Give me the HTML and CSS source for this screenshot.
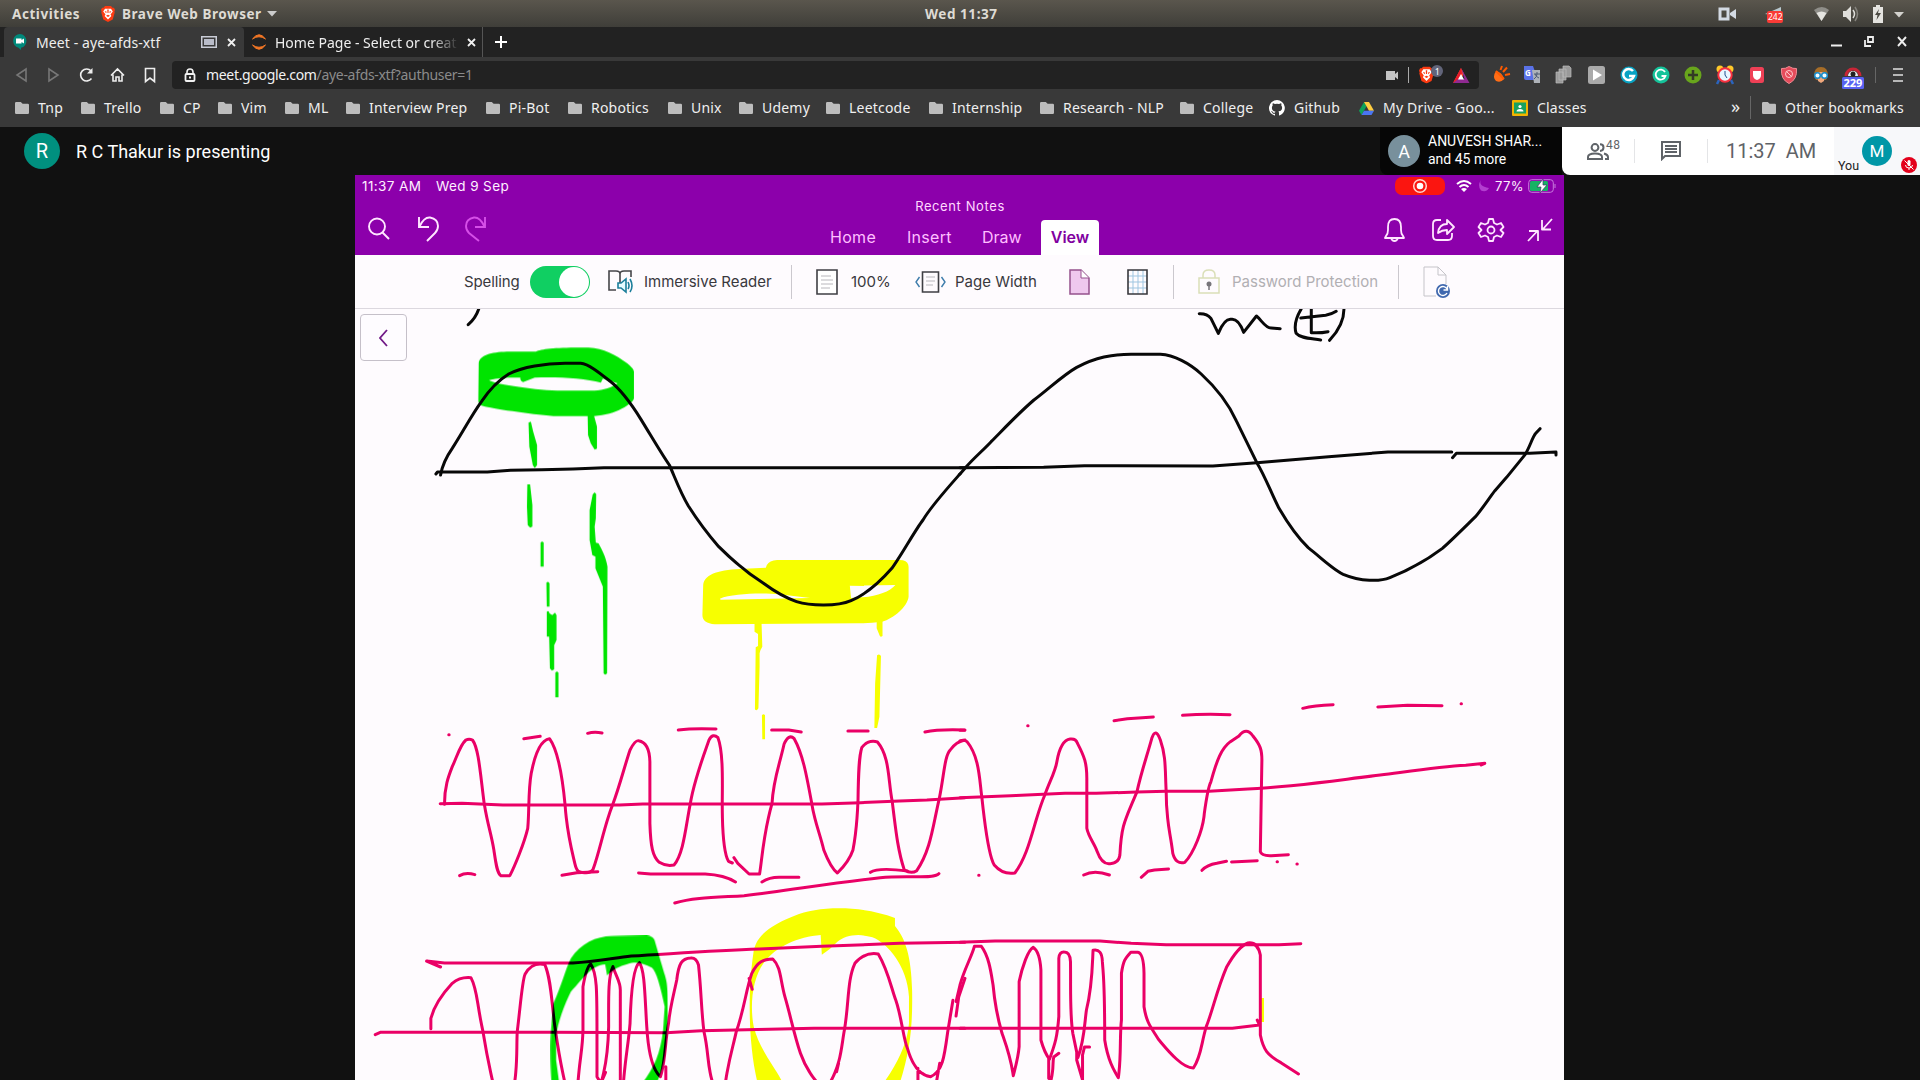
FILE: index.html
```html
<!DOCTYPE html>
<html lang="en">
<head>
<meta charset="utf-8">
<title>Meet - aye-afds-xtf</title>
<link rel="stylesheet" href="styles.css">
</head>
<body>
<svg class="defs" width="0" height="0">
  <symbol id="folder" viewBox="0 0 14 12"><path d="M1.2 0h4.6l1.8 1.8h5.2q1.2 0 1.2 1.2v7.8q0 1.2-1.2 1.2H1.2Q0 12 0 10.800V1.200Q0 0 1.200 0z" fill="#bdbdbd"/></symbol>
  <symbol id="lion" viewBox="0 0 14 16"><path d="M4 0h6l1.500 1.700h1.500L14 4l-.6 1.500.3 1-2 7L7 16l-4.700-2.500-2-7 .3-1L0 4l1-2.300h1.500z" fill="#fb3b12"/><path d="M4 2.700h6l1.800 2.800-2.300 3L10.400 10 7 13.500 3.600 10l.9-1.500-2.300-3z" fill="#fff"/><path d="M3.600 5l2.200.8L5 7.300zM10.400 5l-2.200.8.8 1.500zM5 9.700l2-.9 2 .9-2 1.200zM6.300 3.500h1.400L7.500 7h-1z" fill="#fb3b12"/></symbol>
</svg>

<header class="topbar">
  <span class="activities">Activities</span>
  <svg class="brave" width="14" height="16"><use href="#lion"/></svg>
  <span class="appname">Brave Web Browser</span>
  <svg width="10" height="6"><path d="M0 0h10L5 5.500z" fill="#ccc"/></svg>
  <span class="clock">Wed 11:37</span>
  <svg class="tray" width="190" height="20" viewBox="0 0 190 20">
    <path d="M2 5h8v10H2z" fill="none" stroke="#d3dae3" stroke-width="3"/><path d="M12 9l6-4v10l-6-4z" fill="#d3dae3"/>
    <path d="M47 10L63 3v8h-8z" fill="#b9c9cf"/><rect x="49" y="7" width="16" height="12" rx="2" fill="#fa3b36"/><text x="50" y="16.300" class="tray-num">242</text>
    <path d="M96 6q8-6 15 0l-7.500 11z" fill="#8f8e89"/><path d="M98.500 9q5-3 10 0l-5 8z" fill="#e5e4e0"/>
    <path d="M125 7h3l5-5v16l-5-5h-3z" fill="#dfdeda"/><path d="M135 6q3 4 0 8" stroke="#dfdeda" fill="none" stroke-width="1.500"/><path d="M137 3q5 7 0 14" stroke="#85837d" fill="none" stroke-width="1.500"/>
    <path d="M155 3h3V1h4v2h3v16h-10z" fill="#e5e4e0"/><path d="M161 5l-4 6h2.500l-1 5 4.500-7h-3z" fill="#4c4a43"/>
    <path d="M176 8h10l-5 5.500z" fill="#d3d2ce"/>
  </svg>
</header>

<div class="tabstrip">
  <div class="tab active">
    <svg width="14" height="16" viewBox="0 0 14 16"><path d="M7 0a7 7 0 0 1 1 13.800V16L5.500 13.800A7 7 0 0 1 7 0z" fill="#00897b"/><path d="M3 4.500h5.500v1.600L11 4.500v5l-2.500-1.600v1.600H3z" fill="#fff"/></svg>
    <span class="tab-name">Meet - aye-afds-xtf</span>
    <svg width="16" height="12"><rect x=".75" y=".75" width="14.500" height="10.500" fill="none" stroke="#c9ccd6" stroke-width="1.500"/><rect x="3" y="3" width="10" height="6" fill="#b9bcc9"/></svg>
    <svg class="x" width="9" height="9"><path d="M1 1l7 7M8 1L1 8" stroke="#f0f0f0" stroke-width="1.800"/></svg>
  </div>
  <div class="tab second">
    <svg width="16" height="16"><path d="M1.500 5Q8-3.500 14.500 5 8 .5 1.500 5zM1.500 11q6.500 8.500 13 0Q8 15.500 1.500 11z" fill="#f37726" stroke="#f37726"/></svg>
    <span class="tab-name fade">Home Page - Select or creat</span>
    <svg class="x" width="9" height="9"><path d="M1 1l7 7M8 1L1 8" stroke="#f0f0f0" stroke-width="1.800"/></svg>
  </div>
  <svg class="plus" width="12" height="12"><path d="M6 0v12M0 6h12" stroke="#fff" stroke-width="2"/></svg>
  <svg class="winctl" width="77" height="12"><path d="M0 9.500h11" stroke="#eee" stroke-width="2"/><path d="M37 1h5v5h-5zM34 4v6h6" fill="none" stroke="#eee" stroke-width="1.800"/><path d="M67 1l8 9M75 1l-8 9" stroke="#eee" stroke-width="1.900"/></svg>
</div>

<div class="toolbar">
  <svg class="nav" width="142" height="18" viewBox="0 0 142 18" fill="none" stroke="#eee" stroke-width="1.600">
    <path d="M11 3v12L2 9z" stroke="#777"/><path d="M34 3v12l9-6z" stroke="#777"/>
    <path d="M76 4.800A6 6 0 1 0 76.500 12.500"/><path d="M77.500 2v5.500H72z" fill="#eee" stroke="none"/>
    <path d="M96 9.500l6.500-6.500 6.500 6.500M98 8.500V15h3v-4h3v4h3V8.500"/><path d="M130.500 2.500h9v13l-4.500-3.500-4.500 3.500z"/>
  </svg>
  <div class="address">
    <svg class="lock" width="12" height="14"><path d="M3 6V4q0-3 3-3t3 3v2" fill="none" stroke="#f1f1f1" stroke-width="1.600"/><rect x="1.500" y="6" width="9" height="7" rx="1" fill="none" stroke="#f1f1f1" stroke-width="1.800"/><rect x="5" y="8.500" width="2" height="2" fill="#f1f1f1"/></svg>
    <span class="url"><b>meet.google.com</b>/aye-afds-xtf?authuser=1</span>
    <svg class="addr-icons" width="86" height="22" viewBox="0 0 86 22">
      <path d="M0 7h9v3l3-2.500v8L9 13v3H0z" fill="#c4c4c4"/><path d="M22.500 3v16" stroke="#aaa"/>
      <svg x="33" y="2" width="15" height="18" viewBox="0 0 14 16"><use href="#lion"/></svg>
      <circle cx="51" cy="7" r="6" fill="#62657a"/><text x="48.700" y="10.500" class="badge-one">1</text>
      <path d="M67 19l8-15 3 5.700-3 5z" fill="#ff4724"/><path d="M75 4l8.500 15H67l4.500-4h7z" fill="#902a92"/><path d="M67 19l8-15 1 6-5 6z" fill="#e51b2b"/><path d="M75 10l3 5.500h-6z" fill="#fff"/>
    </svg>
  </div>
  <svg class="ext" width="412" height="30" viewBox="0 0 412 30">
    <path d="M4 11q6 1 8 8-3 4-8 2-4-4 0-10z" fill="#ff6d16"/><path d="M4 11l8 8M8.500 10l1.500-4M11 12l4-4.500M13 15l5-1" stroke="#ff5a00" stroke-width="2"/>
    <path d="M32 6h9l5 14H34q-2 0-2-2z" fill="#5a72e8"/><path d="M40 10h8v13h-6z" fill="#aeb2b8"/><text x="33" y="16" class="gtr">G</text><path d="M42 14h6m-3-2v2q0 3-3 5m1-5q1 3 4 4" stroke="#4e5c75" fill="none"/>
    <g fill="#999" stroke="#bbb" stroke-width=".7"><path d="M64 12h7v11h-7zM67 9h7v11h-7zM71 6h6l2 2v9h-8z"/></g>
    <rect x="96" y="6" width="17" height="18" rx="2.500" fill="#aaa"/><path d="M101 9.500v11l9-5.500z" fill="#fff"/>
    <circle cx="137" cy="15" r="8.500" fill="#08a3c4"/><path d="M141 11a5.500 5.500 0 1 0 1 5h-5" fill="none" stroke="#fff" stroke-width="2.500"/>
    <circle cx="169" cy="15" r="8.500" fill="#15c39a"/><path d="M173 12a5 5 0 1 0 .5 4h-4" fill="none" stroke="#fff" stroke-width="1.800"/>
    <circle cx="201" cy="15" r="8.500" fill="#68a51c"/><path d="M201 10v10M196 15h10" stroke="#333b25" stroke-width="2.500"/>
    <path d="M227 20l-2 4M239 20l2 4" stroke="#2a64be" stroke-width="2.500"/><circle cx="228" cy="9" r="3.500" fill="#ffc929"/><circle cx="238" cy="9" r="3.500" fill="#ffc929"/><circle cx="233" cy="15" r="6.700" fill="#e8f7ff" stroke="#f9313f" stroke-width="2"/><path d="M233 11v4l2 3" stroke="#1d508f" fill="none"/>
    <rect x="258" y="7" width="14" height="16" rx="2.500" fill="#ef4056"/><path d="M261 11h8v4q0 4-4 5-4-1-4-5z" fill="#fff"/>
    <path d="M297 6.500q4 2.500 7.500 2 1 11-7.500 15-8.500-4-7.500-15 4 .5 7.500-2z" fill="#e64b5b" stroke="#f08b93"/><circle cx="297" cy="14" r="3.500" fill="none" stroke="#ffc8ca"/><path d="M294.500 11.500l5 5" stroke="#ffc8ca"/>
    <path d="M322 16q0-9 7-9t7 9l-2 4h-10z" fill="#a66d28"/><path d="M325 12h8l-1 9-3 2-3-2z" fill="#f1a87c"/><circle cx="325.500" cy="15.500" r="2.800" fill="#f0fcff" stroke="#168ccb" stroke-width="1.500"/><circle cx="332.500" cy="15.500" r="2.800" fill="#f0fcff" stroke="#168ccb" stroke-width="1.500"/>
    <path d="M354 16a7 7 0 0 1 14 0" fill="none" stroke="#c82536" stroke-width="3"/><path d="M356 16a5 5 0 0 1 10 0" fill="#eee"/><circle cx="361" cy="14" r="2.500" fill="#222"/><rect x="350" y="17" width="22" height="12" rx="1.500" fill="#5862f2"/><text x="351.500" y="27" class="ext-num">229</text>
    <path d="M383.500 7v16" stroke="#666"/><path d="M401 9h10M401 15h10M401 21h10" stroke="#e1e1e1" stroke-width="1.600"/>
  </svg>
</div>

<nav class="bookmarks">
  <a><svg width="14" height="12"><use href="#folder"/></svg>Tnp</a>
  <a><svg width="14" height="12"><use href="#folder"/></svg>Trello</a>
  <a><svg width="14" height="12"><use href="#folder"/></svg>CP</a>
  <a><svg width="14" height="12"><use href="#folder"/></svg>Vim</a>
  <a><svg width="14" height="12"><use href="#folder"/></svg>ML</a>
  <a><svg width="14" height="12"><use href="#folder"/></svg>Interview Prep</a>
  <a><svg width="14" height="12"><use href="#folder"/></svg>Pi-Bot</a>
  <a><svg width="14" height="12"><use href="#folder"/></svg>Robotics</a>
  <a><svg width="14" height="12"><use href="#folder"/></svg>Unix</a>
  <a><svg width="14" height="12"><use href="#folder"/></svg>Udemy</a>
  <a><svg width="14" height="12"><use href="#folder"/></svg>Leetcode</a>
  <a><svg width="14" height="12"><use href="#folder"/></svg>Internship</a>
  <a><svg width="14" height="12"><use href="#folder"/></svg>Research - NLP</a>
  <a><svg width="14" height="12"><use href="#folder"/></svg>College</a>
  <a><svg width="16" height="16" viewBox="0 0 16 16"><path d="M8 0a8 8 0 0 0-2.500 15.600c.4.100.5-.2.500-.4v-1.400c-2.200.5-2.700-1-2.700-1-.4-.9-.9-1.200-.9-1.200-.7-.5.100-.5.100-.5.800.1 1.200.8 1.200.8.700 1.300 1.900.9 2.300.7.100-.5.300-.9.500-1.100-1.800-.2-3.600-.9-3.600-4 0-.9.300-1.600.8-2.100-.1-.2-.4-1 .1-2.100 0 0 .7-.2 2.200.8a7.600 7.600 0 0 1 4 0c1.500-1 2.200-.8 2.200-.8.400 1.100.2 1.900.1 2.100.5.600.8 1.300.8 2.100 0 3.100-1.900 3.700-3.700 3.900.3.300.6.800.6 1.500v2.200c0 .2.100.5.600.4A8 8 0 0 0 8 0z" fill="#fff"/></svg>Github</a>
  <a><svg width="15" height="13" viewBox="0 0 15 13"><path d="M5 0L0 8.700 2.500 13l5-8.700z" fill="#0da25a"/><path d="M5 0h5l5 8.700h-5z" fill="#ffcd40"/><path d="M2.500 13L5 8.700h10L12.500 13z" fill="#4a75f2"/></svg>My Drive - Goo...</a>
  <a><svg width="16" height="16" viewBox="0 0 16 16"><rect width="16" height="16" rx="1" fill="#f4b400"/><rect x="2" y="2.500" width="12" height="11" fill="#19a15f"/><circle cx="8" cy="6.500" r="1.600" fill="#fff"/><path d="M4.500 11.500q0-2.500 3.500-2.500t3.500 2.500z" fill="#fff"/></svg>Classes</a>
  <span class="more">»</span>
  <a class="other"><svg width="14" height="12"><use href="#folder"/></svg>Other bookmarks</a>
</nav>

<main class="meet">
  <div class="meet-head">
    <span class="avatar host">R</span>
    <span class="presenting">R C Thakur is presenting</span>
    <div class="others"><span class="avatar guest">A</span><div class="names">ANUVESH SHAR...<br>and 45 more</div></div>
    <div class="controls">
      <div class="ctl people"><svg width="22" height="17" viewBox="0 0 22 17" fill="none" stroke="#5f6368" stroke-width="2"><circle cx="8" cy="4.500" r="3.400"/><path d="M1 16v-2q0-3.500 7-3.500t7 3.500v2z"/><path d="M13 1.300q3.500 0 3.500 3.200T13 7.900" /><path d="M17 10.500q4 1.200 4 3.500v2h-3"/></svg><sup>48</sup></div>
      <div class="ctl chat"><svg width="20" height="20" viewBox="0 0 20 20"><path d="M1 1h18v14H4l-3 3z" fill="none" stroke="#5f6368" stroke-width="2"/><path d="M4 5h12M4 8h12M4 11h12" stroke="#5f6368" stroke-width="1.800"/></svg></div>
      <div class="ctl time">11:37&nbsp; AM</div>
      <div class="you"><span>You</span><span class="avatar me">M</span>
        <svg class="mic" width="16" height="16" viewBox="0 0 16 16"><circle cx="8" cy="8" r="8" fill="#e3001b"/><rect x="6.500" y="3" width="3" height="6" rx="1.500" fill="#fff"/><path d="M4.500 8q0 3 3.500 3t3.500-3M8 11v2M3.500 3.500l9 9" stroke="#fff" fill="none"/></svg></div>
    </div>
  </div>

  <section class="share">
    <div class="purple">
      <div class="status"><span class="s-time">11:37 AM</span><span class="s-date">Wed 9 Sep</span>
        <svg class="s-icons" width="98" height="18" viewBox="0 0 98 18"><rect width="50" height="18" rx="7" fill="#fb1510"/><circle cx="25" cy="9" r="6.300" fill="none" stroke="#ffd5cf" stroke-width="1.500"/><circle cx="25" cy="9" r="3.300" fill="#fff"/><g fill="none" stroke="#fff" stroke-width="2"><path d="M62 7q7-6 14 0M64.500 10q4.500-4 9 0"/></g><path d="M69 15l-3-3q3-2 6 0z" fill="#fff"/><path d="M86 3q-3 6 8 8-3 5-8 2.500-4-5 0-10.500z" fill="#b33fd0"/></svg>
        <span class="s-pct">77%</span>
        <svg width="28" height="14" viewBox="0 0 28 14"><rect x=".7" y=".7" width="24.600" height="12.600" rx="3" fill="none" stroke="#c77add"/><rect x="2" y="2" width="18" height="10" rx="1.500" fill="#16b364"/><path d="M15 0L9 8h4l-1 6 7-8h-4z" fill="#fff" stroke="#44306a" stroke-width=".7"/><path d="M27 5v4" stroke="#c77add"/></svg>
      </div>
      <div class="doc-title">Recent Notes</div>
      <div class="tabsrow">
        <svg class="left-tools" width="122" height="28" viewBox="0 0 122 28" fill="none" stroke="#ffe6ff" stroke-width="1.900"><circle cx="9" cy="11.500" r="8"/><path d="M14.500 17.500l6.500 6.500"/><path d="M51 2v10h10M51.500 11.500Q56 2 62 2.500 70 4 70 11q0 4-3 7l-8 8"/><path d="M117 2v10h-10M116.500 11.500Q112 2 106 2.500 98 4 98 11q0 4 3 7l10 8" stroke="#d64fe8"/></svg>
        <span class="tb home">Home</span><span class="tb insert">Insert</span><span class="tb draw">Draw</span><span class="tb view">View</span>
        <svg class="right-tools" width="170" height="28" viewBox="0 0 170 28" fill="none" stroke="#ffe6ff" stroke-width="1.800" stroke-linejoin="round"><path d="M3 20q2-2 2-6v-3q0-8 6.500-8t6.500 8v3q0 4 2 6l1 2H2zM8 22q1 3 3.500 3t3.500-3"/><path d="M58 4h-4q-4 0-4 4v12q0 4 4 4h11q4 0 4-4v-3M55 17q1-9 9-9V4l7 7-7 7v-4q-5 0-9 3z"/><path d="M106 3h4l1 4 3 1.500 4-1.500 2.500 4-3 3 3 3-2.500 4-4-1.500-3 1.500-1 4h-4l-1-4-3-1.500-4 1.500-2.500-4 3-3-3-3 2.500-4 4 1.500 3-1.500z"/><circle cx="108" cy="14" r="3.500"/><path d="M169 3l-9 10M159 4v9.500h9M145 25l9-9.500M146 15h9v10"/></svg>
      </div>
    </div>
    <div class="ribbon">
      <span class="spelling">Spelling</span><span class="toggle"><i></i></span>
      <svg width="26" height="28" viewBox="0 0 26 28" fill="none" stroke="#454549" stroke-width="1.600"><path d="M8 22H1V3h7q4 0 4 3v13M12 6q0-3 4-3h7v6"/><path d="M10 15h3l5-4v13l-5-4h-3z" fill="#e6fbff" stroke="#1c7f9b"/><path d="M20 14q2 4 0 7M22 11q4 7 0 13" stroke="#1c7f9b"/></svg>
      <span class="lbl imm">Immersive Reader</span><i class="sep"></i>
      <svg width="22" height="26" viewBox="0 0 22 26"><path d="M1 1h20v24H1z" fill="#fff" stroke="#3f3f44" stroke-width="1.600"/><path d="M5 7h10M5 11h12M5 15h12M5 19h9" stroke="#b8b7bc"/></svg>
      <span class="lbl pct">100%</span>
      <svg width="31" height="22" viewBox="0 0 31 22" fill="none"><path d="M7.500 1h16v20h-16z" stroke="#3f3f44" stroke-width="1.600"/><path d="M11 6h9M11 10h9M11 14h7" stroke="#b8b7bc"/><path d="M4.500 6L1 11l3.500 5M26.500 6l3.500 5-3.500 5" stroke="#3d7cab" stroke-width="1.400"/></svg>
      <span class="lbl pw">Page Width</span>
      <svg width="21" height="26" viewBox="0 0 21 26"><path d="M1 1h11l8 8v16H1z" fill="#efc8ee" stroke="#95518d" stroke-width="1.500"/><path d="M12 1v8h8" fill="#fff" stroke="#95518d"/></svg>
      <svg class="grid" width="21" height="26" viewBox="0 0 21 26"><path d="M6 1v24M11 1v24M16 1v24M1 7h19M1 13h19M1 19h19" stroke="#9fc5e1"/><path d="M1 1h19v24H1z" fill="none" stroke="#37373c" stroke-width="1.600"/></svg>
      <i class="sep s2"></i>
      <svg class="plock" width="22" height="25" viewBox="0 0 22 25"><path d="M1 9h20v15H1zM5 9V6q0-5 6-5t6 5v3" fill="none" stroke="#dadfb8" stroke-width="1.500"/><circle cx="11" cy="15" r="2.500" fill="#77757a"/><path d="M11 16v5" stroke="#77757a" stroke-width="1.500"/></svg>
      <span class="lbl pp">Password Protection</span><i class="sep s3"></i>
      <svg class="sync" width="30" height="32" viewBox="0 0 30 32"><path d="M13 30H1V1h14l8 8v9M15 1v8h8" fill="none" stroke="#c5c4c9"/><circle cx="20" cy="25" r="7" fill="#4068ae"/><path d="M24 23a4.500 4.500 0 1 0 0 4M24.500 20v4h-4" fill="none" stroke="#fff" stroke-width="1.400"/></svg>
    </div>
    <div class="canvas">
      <svg class="ink" width="1209" height="771" viewBox="355 309 1209 771">
        <!-- yellow highlighter -->
        <g class="yellow">
          <g transform="translate(355 300) scale(.38903 .33333)">
            <path fill-rule="evenodd" d="M895 855C898 820 940 808 1000 806L1056 803Q1060 782 1085 780H1400Q1422 780 1423 800V890C1420 920 1385 955 1355 965Q1320 970 1290 970L925 973Q893 970 893 945zM938 896C970 880 1050 878 1090 883L1170 894 940 899zM1272 857L1389 855C1375 875 1340 890 1300 892L1275 894z"/>
            <path d="M1027 968H1045L1047 1040Q1040 1052 1040 1060V1100L1037 1225Q1032 1235 1028 1228L1030 1042 1036 1038 1036 1002 1027 995zM1046 1246Q1050 1240 1054 1246V1318H1047zM1341 960H1356V1008Q1350 1014 1348 1005L1341 985zM1342 1066Q1348 1060 1352 1068L1348 1250 1342 1284H1335L1337 1150z"/>
          </g>
          <g transform="translate(355 690) scale(.38903 .33333)">
            <path fill-rule="evenodd" d="M1024 790C1030 735 1070 705 1130 677C1190 648 1300 645 1388 684V708C1415 745 1430 800 1432 900C1434 1020 1425 1090 1400 1180H1358C1395 1120 1420 1060 1424 1000V920C1420 830 1370 760 1330 742C1290 728 1260 738 1240 755Q1220 780 1200 794L1197 735C1140 740 1080 770 1050 820C1020 870 1015 950 1025 1010C1040 1080 1080 1130 1100 1180H1035C1010 1060 1010 900 1024 790z"/>
          </g>
          <path d="M1261 998h3v24h-3z"/>
        </g>
        <!-- black message signal -->
        <g class="black">
          <g transform="translate(355 300) scale(.38903 .33333)">
            <path d="M318 27Q310 55 291 74"/>
          </g>
          <g transform="translate(960 300) scale(.38903 .33333)">
            <path d="M615 41Q635 40 645 55L664 100Q680 55 697 58C712 55 722 75 729 97L762 48C775 60 785 85 800 84L823 86M877 27C860 60 860 85 864 100C875 115 900 115 927 120M903 27V98Q925 100 946 95M876 54L940 46Q955 43 967 34M987 27C987 60 975 90 950 121"/>
          </g>
        </g>
        <!-- pink carrier and modulated waves -->
        <g class="pink">
          <g transform="translate(355 690) scale(.38903 .33333)">
            <path d="M230 343C230 290 240 260 250 230C262 200 270 165 285 150Q293 145 302 150C318 175 322 250 332 340C340 400 350 430 357 480C362 520 365 550 375 557H398C410 530 435 460 444 415C448 370 445 300 453 250C462 195 475 150 500 146C515 170 530 220 540 345C545 430 557 480 565 520C570 545 575 548 590 548Q605 550 612 538C630 480 640 410 662 345C680 290 695 220 707 180Q720 150 729 152C745 155 757 170 758 215V400C760 470 765 500 782 517Q800 530 820 525C845 490 850 410 862 340C872 270 895 200 910 150Q920 128 933 143C945 180 945 250 944 340C944 430 948 490 960 514L970 519M974 503L984 520 1013 552H1040C1047 500 1050 430 1072 340C1075 270 1090 230 1103 162Q1115 130 1129 146C1150 190 1160 250 1174 340C1180 390 1195 430 1205 480C1215 510 1230 540 1240 549Q1270 515 1280 480C1290 420 1292 360 1293 330C1294 250 1295 200 1303 172Q1320 148 1343 156C1375 200 1370 270 1381 335C1390 420 1395 480 1412 540Q1430 553 1444 542C1480 480 1485 410 1502 325C1515 250 1515 200 1530 180Q1545 155 1568 150"/>
            <path d="M219 341L275 340 380 345H680L740 342H1200L1300 338 1400 333 1470 330 1568 323"/>
            <path d="M241 134h1M434 146L476 139M598 130Q615 124 635 129M831 120Q870 114 928 117M1071 120H1115L1147 126M1267 123H1319M1465 126Q1500 117 1568 120M269 557Q285 546 308 554M532 556L570 548 624 545M729 549L760 552H900Q950 555 978 576M1046 576Q1065 562 1090 562H1141M1325 547C1340 535 1380 537 1420 543M822 639C870 622 930 622 1000 617C1120 600 1220 580 1350 563C1420 555 1490 568 1501 551"/>
            <path d="M52 1034L65 1027H500L800 1028 890 1022 1180 1015H1568M220 831L184 813 230 819H560C620 815 660 805 710 798C830 790 920 782 1040 777L1200 769 1400 760 1568 757"/>
            <path d="M195 1016V985C205 940 230 905 250 880Q270 860 298 863C315 900 312 935 329 1025C338 1090 345 1130 355 1180M410 1180C418 1120 415 1070 417 1025C425 950 430 870 437 853Q455 815 488 824C505 870 505 940 515 1020C525 1100 530 1130 540 1180M573 1180C578 1100 585 1080 586 1020V890Q595 830 606 822C622 850 622 900 622 1025V1160L632 1180 644 1147M632 1180C648 1120 651 1060 652 1010C652 930 650 860 663 830C675 870 682 875 682 900V1180M690 1180C694 1110 703 1060 707 1000C709 920 715 830 731 818C745 840 745 920 750 1010C755 1110 770 1145 785 1160C798 1120 796 1060 806 1000C810 950 820 910 827 870C832 820 840 805 863 804Q877 802 883 825C890 900 890 960 897 1025C910 1090 905 1130 920 1180M799 1130V1180M952 1180C960 1110 972 1070 980 1025C1000 960 1005 900 1020 850C1035 815 1050 807 1074 807C1095 830 1093 870 1105 920C1120 980 1128 1030 1145 1090Q1160 1140 1190 1180M1220 1180C1250 1120 1250 1070 1258 1020C1270 940 1265 870 1285 820Q1310 785 1345 792C1370 840 1380 900 1390 930C1405 980 1410 1050 1420 1075Q1440 1155 1480 1160C1510 1145 1515 1100 1523 1030L1537 931M1447 1135V1180M1503 1120L1494 1180M1243 1120L1238 1145M1545 978L1552 920 1568 865M1013 865L1021 898"/>
          </g>
          <g transform="translate(960 690) scale(.38903 .33333)">
            <path d="M0 153Q10 148 18 155C50 200 50 270 56 320C65 420 75 500 88 525Q110 555 141 549C180 490 190 390 218 315C230 275 245 245 249 215C255 175 265 150 283 147Q298 145 302 160C320 200 326 220 326 265V415C330 440 345 460 352 483Q365 525 386 521Q408 520 411 495C415 400 425 390 455 305C465 250 480 200 493 145Q503 110 515 150C530 200 527 240 530 305C530 400 540 420 547 490Q555 525 578 517C600 490 625 420 628 370C635 310 638 290 645 275C660 210 672 175 695 155L717 138Q736 110 753 138C772 165 776 180 776 210L772 485Q775 498 800 497L844 494"/>
            <path d="M0 323L130 317 270 310H350L455 306 530 304H640L740 297C860 290 940 275 1080 255C1200 237 1240 230 1300 226L1349 220 1340 225"/>
            <path d="M0 121H12M174 107h1M396 92L430 86 497 81M572 76Q630 70 694 74M881 55Q910 46 959 44M1074 51L1150 46 1239 47M1288 41h1M48 556h1M318 555Q345 538 384 555M466 562L483 544 500 540 536 537M622 541Q635 525 660 520L685 514M698 516L764 512M815 515h1M866 522h1"/>
            <path d="M0 757L90 753H360L440 760 530 764H820L876 761M0 1015H700L770 1005 764 990"/>
            <path d="M-10 935L0 885C10 840 30 800 37 769H55C75 800 80 850 85 885C90 950 98 990 108 1030C120 1070 130 1100 137 1157C145 1120 150 1100 152 1070V875C160 830 175 780 188 772Q205 785 208 840V1050C215 1080 225 1100 230 1108C245 1060 250 1040 254 980V805Q255 785 268 786Q283 786 284 815C285 900 282 970 290 1030L303 1103C320 1050 320 1000 325 960C340 890 340 830 342 781Q365 775 366 815C370 880 372 880 372 1050C380 1110 395 1140 407 1163C415 1100 410 1040 415 990V850C420 810 425 805 439 787H457Q472 790 473 850V950C480 1000 490 1010 510 1048C530 1075 570 1135 600 1134C620 1100 620 1060 633 1010C650 960 660 900 685 832C710 780 725 765 740 759Q765 755 772 795V1035C780 1080 790 1095 825 1118L870 1152M228 1105V1165L234 1170C242 1130 237 1120 241 1101L254 1090M300 1085V1110L315 1170V1095L320 1071H333"/>
          </g>
        </g>
        <g class="black">
          <g transform="translate(355 300) scale(.38903 .33333)">
            <path d="M220 525C225 490 235 470 250 445C275 400 300 345 325 305C345 270 370 240 395 222C430 200 490 190 540 190H580C600 192 625 215 655 243C685 270 712 315 735 358C765 415 790 465 808 495C820 525 835 575 857 618C880 660 905 700 935 740C965 775 1010 820 1050 850C1085 880 1105 893 1135 905C1170 918 1240 920 1275 902C1310 885 1350 845 1380 805C1405 765 1440 690 1460 660C1480 620 1530 555 1555 522"/>
            <path d="M208 522L212 516H340L400 511 480 509 560 507 640 503H1568"/>
          </g>
          <g transform="translate(960 300) scale(.38903 .33333)">
            <path d="M0 522L18 498C35 475 60 450 80 425C110 390 150 340 190 300C230 265 265 225 300 202C350 172 390 163 440 163H515C550 165 590 190 620 222C660 265 690 310 710 362L763 488C785 530 800 580 820 625C845 675 870 715 895 743C930 775 960 810 985 823C1030 845 1080 845 1105 833C1150 812 1200 780 1240 745C1260 725 1290 690 1325 650C1340 630 1360 595 1375 572L1405 532 1453 463C1465 440 1472 410 1480 400L1491 386"/>
            <path d="M0 503L215 502 320 497 650 498 763 488C850 480 1000 465 1100 456H1264M1266 473L1276 460H1465L1532 456V465"/>
          </g>
        </g>
        <!-- green highlighter darkens the ink below it -->
        <g class="green">
          <g transform="translate(355 300) scale(.38903 .33333)">
            <path fill-rule="evenodd" d="M318 190C320 165 350 157 390 155H465C480 146 520 142 600 143C640 145 670 165 700 190Q716 205 717 215V295C715 310 670 345 615 348H510C450 342 350 325 330 318Q316 314 317 300zM345 240C370 233 400 232 425 233Q424 243 432 246L462 233C520 230 590 235 632 248L637 236 675 250C660 262 640 270 615 272H520C450 268 350 250 345 240z"/>
            <path d="M446 368L452 365 458 395 468 435V495L462 504 457 495 448 440zM598 345H614L622 380V446L616 449 606 430 599 405zM443 553H450L456 615V680L450 683 444 675 442 620zM611 583L616 577 620 582 619 655 616 680 619 728 626 730C635 750 645 770 649 800L648 1120Q643 1127 639 1120L637 860 618 805V770L610 765 603 720V630zM477 728Q481 722 485 728V800H477zM492 848Q497 842 500 850V920H493zM493 935Q498 930 500 940L507 945 514 938 518 945V1020L512 1035V1108L506 1112 501 1105 499 1010H493zM515 1118Q519 1112 523 1118V1192H515z"/>
          </g>
          <g transform="translate(355 690) scale(.38903 .33333)">
            <path d="M505 1180C502 1100 500 1050 510 940C530 890 540 840 555 805C580 760 620 738 660 738L750 736Q765 738 770 750C780 790 785 810 795 850C804 880 804 900 804 980C800 1060 800 1120 775 1180H738C770 1130 785 1090 792 1020L796 950C785 890 775 845 763 833C740 820 725 812 700 822Q670 830 648 856L643 823C610 825 590 860 555 905C540 940 520 1000 517 1040V1110L525 1180z"/>
          </g>
        </g>
      </svg>
      <button class="back"><svg width="10" height="18"><path d="M8 1L1 9l7 8" fill="none" stroke="#711a87" stroke-width="1.800"/></svg></button>
    </div>
  </section>
</main>
</body>
</html>
```

FILE: styles.css
```css
* { box-sizing: border-box; }
body { margin: 0; width: 1920px; height: 1080px; overflow: hidden; background: #111; font-family: "Noto Sans", sans-serif; font-size: 14px; color: #f0f0f0; display: flex; flex-direction: column; }
svg { display: block; flex: none; }
.defs { display: none; }
span, a { white-space: nowrap; }

.topbar { height: 27px; flex: none; background: linear-gradient(#5a564d, #3f3e39); display: grid; grid-template-columns: 89px 21px 145px 658px 793px 190px; padding-left: 12px; align-items: center; font-weight: 700; font-size: 13.500px; letter-spacing: .55px; color: #dedbd4; }
.tray-num { font: 8.500px "Noto Sans", sans-serif; letter-spacing: 0; fill: #fff; }

.tabstrip { height: 30px; flex: none; background: #222; display: flex; align-items: center; padding-left: 4px; color: #eee; }
.tab { height: 30px; display: flex; align-items: center; }
.tab.active { width: 240px; background: #393939; border-radius: 4px 4px 0 0; padding-left: 9px; }
.tab.active .tab-name { width: 165px; margin-left: 9px; letter-spacing: .1px; }
.tab .x { margin-left: 10px; }
.tab.second { width: 239px; padding-left: 7px; border-right: 1px solid #555; }
.tab.second .tab-name { width: 184px; margin-left: 8px; overflow: hidden; }
.fade { -webkit-mask-image: linear-gradient(90deg, #000 85%, transparent 100%); mask-image: linear-gradient(90deg, #000 85%, transparent 100%); }
.tab.second .x { margin-left: 8px; }
.plus { margin-left: 12px; }
.winctl { margin-left: auto; margin-right: 12px; }

.toolbar { height: 36px; flex: none; background: #393939; display: flex; align-items: center; }
.nav { margin-left: 15px; }
.address { margin-left: 15px; width: 1307px; height: 28px; background: #222; border-radius: 4px; display: flex; align-items: center; padding-left: 12px; }
.url { margin-left: 10px; color: #8b8b8b; font-size: 14px; letter-spacing: -.32px; padding-bottom: 1px; }
.url b { font-weight: 400; color: #f2f2f2; }
.addr-icons { margin-left: auto; margin-right: 7px; }
.badge-one { font: 9px "Noto Sans", sans-serif; fill: #fff; }
.ext { margin-left: 13px; }
.gtr { font: bold 8px "Noto Sans", sans-serif; fill: #fff; }
.ext-num { font: bold 11px "Noto Sans", sans-serif; fill: #fff; }

.bookmarks { height: 34px; flex: none; background: #393939; display: grid; grid-template-columns: 66px 79px 58px 67px 61px 140px 82px 100px 71px 87px 103px 111px 140px 89px 90px 153px 219px 31px 150px; padding-left: 15px; align-items: center; padding-bottom: 5px; letter-spacing: .2px; }
.bookmarks a { display: flex; align-items: center; gap: 9px; }
.bookmarks a svg { margin-top: 1px; }
.more { font-size: 18px; line-height: 20px; padding-bottom: 3px; border-right: 1px solid #666; width: 20px; }

.meet { flex: 1; display: flex; flex-direction: column; }
.meet-head { height: 48px; flex: none; display: flex; align-items: center; font-family: Roboto, sans-serif; }
.avatar { border-radius: 50%; display: grid; place-items: center; color: #fff; flex: none; }
.host { width: 36px; height: 36px; margin-left: 24px; background: #00907f; font-size: 20px; }
.presenting { margin-left: 16px; width: 1304px; font-size: 18px; color: #fff; }
.others { width: 182px; height: 48px; background: #060606; display: flex; align-items: center; padding-left: 8px; border-radius: 0 0 0 8px; }
.guest { width: 32px; height: 32px; background: #78909c; font-size: 18px; }
.names { margin: -2px 0 0 8px; font-size: 14px; line-height: 18px; white-space: nowrap; color: #fff; }
.controls { width: 358px; height: 48px; background: #fff; border-radius: 0 0 0 8px; display: flex; align-items: center; color: #5f6368; }
.ctl { height: 24px; display: flex; align-items: center; }
.people { width: 73px; padding-left: 25px; border-right: 1px solid #e4e5e7; }
.people sup { font-size: 12px; margin: -12px 0 0 -3px; letter-spacing: .5px; }
.chat { width: 73px; padding-left: 26px; border-right: 1px solid #e4e5e7; }
.time { width: 126px; padding-left: 18px; font-size: 20px; white-space: nowrap; }
.you { width: 86px; height: 48px; background: #f7f8fa; display: flex; position: relative; color: #222; font-size: 12.500px; padding-left: 4px; }
.you > span:first-child { margin-top: 31px; width: 24px; }
.me { width: 30px; height: 30px; margin-top: 9px; background: #0097a7; font-size: 17px; }
.mic { position: absolute; right: 3px; bottom: 2px; }

.share { margin-left: 355px; width: 1209px; flex: 1; display: flex; flex-direction: column; font-family: Inter, sans-serif; background: #fefbfe; }
.purple { height: 80px; flex: none; background: #8c00ab; color: #ffd9ff; display: flex; flex-direction: column; }
.status { height: 22px; display: flex; align-items: center; padding: 0 0 1px 7px; font-size: 13.500px; letter-spacing: .4px; color: #fff0ff; }
.s-time { width: 74px; }
.s-icons { margin-left: auto; }
.s-pct { width: 33px; margin-left: 2px; font-size: 13px; }
.status svg:last-child { margin-right: 8px; }
.doc-title { height: 18px; line-height: 18px; text-align: center; font-size: 13px; letter-spacing: .6px; padding-left: 1px; }
.tabsrow { height: 40px; display: flex; align-items: flex-end; }
.left-tools { margin: 0 0 12px 13px; }
.tb { height: 35px; line-height: 35px; font-size: 16px; padding-top: 0; color: #ffbfff; }
.home { margin-left: 340px; width: 77px; letter-spacing: .3px; }
.insert { width: 75px; letter-spacing: .3px; }
.draw { width: 59px; }
.view { width: 58px; background: #fff; border-radius: 4px 4px 0 0; color: #8100a0; font-weight: 600; text-align: center; }
.right-tools { margin: 0 11px 11px auto; }

.ribbon { height: 54px; flex: none; border-bottom: 1px solid #dcd8df; display: flex; align-items: center; color: #39383d; font-size: 15px; padding-left: 109px; }
.spelling { width: 66px; font-size: 15px; letter-spacing: -.1px; }
.toggle { width: 60px; height: 32px; border-radius: 16px; background: #10cf62; margin-right: 18px; display: flex; justify-content: flex-end; padding: 1px; }
.toggle i { width: 30px; height: 30px; border-radius: 50%; background: #fff; }
.imm { margin-left: 10px; width: 147px; }
.sep { width: 1px; height: 34px; background: #cbc8ce; margin-right: 24px; }
.pct { margin-left: 13px; width: 64px; }
.pw { margin-left: 9px; width: 114px; }
.grid { margin-left: 37px; }
.s2 { margin: 0 24px 0 25px; }
.pp { margin-left: 12px; width: 166px; color: #b1afb3; }

.canvas { flex: 1; position: relative; }
.ink { isolation: isolate; }
.ink path { vector-effect: non-scaling-stroke; stroke-linecap: round; stroke-linejoin: round; }
.black { fill: none; stroke: #080808; stroke-width: 3; }
.pink { fill: none; stroke: #ea0066; stroke-width: 3; }
.green { fill: #00e400; mix-blend-mode: multiply; }
.yellow { fill: #f7ff00; }
.back { position: absolute; left: 5px; top: 5px; width: 47px; height: 47px; padding: 0; border: 1px solid #c5c0c9; border-radius: 4px; background: #fefcff; display: grid; place-items: center; }
```
